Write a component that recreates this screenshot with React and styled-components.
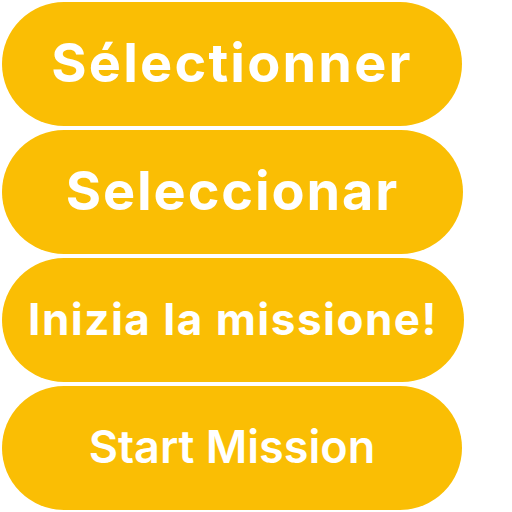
import React from 'react';
import styled, { createGlobalStyle } from 'styled-components';

const GlobalStyle = createGlobalStyle`
  html, body {
    margin: 0;
    padding: 0;
    background: #ffffff;
  }
`;

const buttons = [
  { label: 'Sélectionner', size: 54, weight: 700, spacing: 2.2, width: 460 },
  { label: 'Seleccionar', size: 54, weight: 700, spacing: 1.9, width: 461 },
  { label: 'Inizia la missione!', size: 44, weight: 700, spacing: 1.5, width: 462 },
  { label: 'Start Mission', size: 45, weight: 600, spacing: 0, width: 460 },
];

const App = () => {
  return (
    <>
      <GlobalStyle />
      <ButtonStack>
        {buttons.map((b) => (
          <PillButton
            key={b.label}
            size={b.size}
            weight={b.weight}
            spacing={b.spacing}
            w={b.width}
          >
            {b.label}
          </PillButton>
        ))}
      </ButtonStack>
    </>
  );
};

const ButtonStack = styled.div`
  display: flex;
  flex-direction: column;
  gap: 4px;
  padding: 2px;
`;

const PillButton = styled.div`
  width: ${({ w }) => w}px;
  height: 124px;
  box-sizing: border-box;
  padding-bottom: 3px;
  border-radius: 62px;
  background: #fabe04;
  color: #ffffff;
  display: flex;
  align-items: center;
  justify-content: center;
  font-family: Inter, 'Open Sans', sans-serif;
  font-size: ${({ size }) => size}px;
  font-weight: ${({ weight }) => weight};
  letter-spacing: ${({ spacing }) => spacing}px;
  white-space: nowrap;
`;

export default App;
